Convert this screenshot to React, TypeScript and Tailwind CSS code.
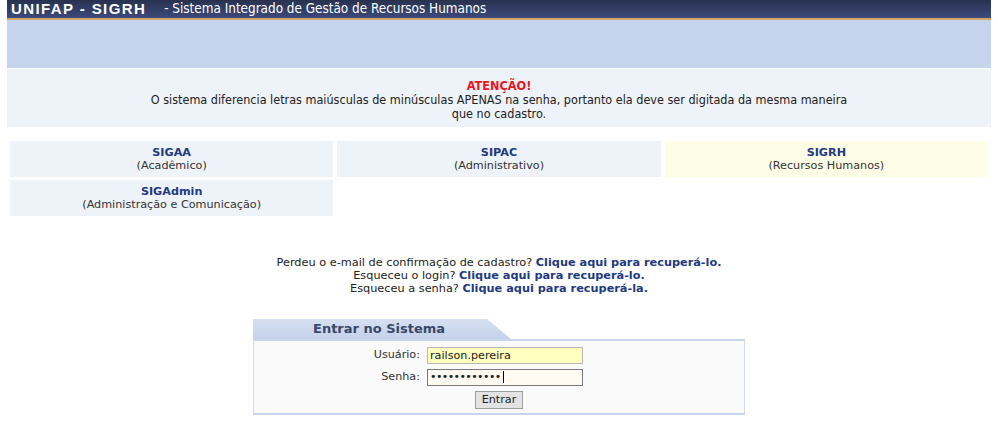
import React from "react";

const verd = "font-['DejaVu_Sans',Verdana,sans-serif]";
const cond = "font-['DejaVu_Sans_Condensed','Liberation_Sans_Narrow',Tahoma,sans-serif]";

function Cell({ title, sub, yellow }: { title: string; sub: string; yellow?: boolean }) {
  return (
    <div
      className={`h-[36px] flex flex-col items-center justify-center text-[11.2px] leading-[13px] ${
        yellow ? "bg-[#fefee6]" : "bg-[#eef2f9]"
      }`}
    >
      <span className="font-bold text-[#223a80]">{title}</span>
      <span className="text-[#333]">{sub}</span>
    </div>
  );
}

export default function App() {
  return (
    <div className={`w-[998px] h-[444px] bg-white overflow-hidden ${verd}`}>
      <div className="ml-[7px] w-[984px]">
        {/* header */}
        <div className="h-[18px] bg-gradient-to-b from-[#28324f] to-[#3c4a7c] flex items-center pl-[4px] text-white">
          <span className="font-['Liberation_Sans',Arial,sans-serif] font-bold text-[15px] tracking-[1.4px] leading-[18px]">
            UNIFAP - SIGRH
          </span>
          <span className={`${cond} text-[13.4px] ml-[18px] leading-[18px]`}>
            - Sistema Integrado de Gestão de Recursos Humanos
          </span>
        </div>
        <div className="h-[2px] bg-[#d5a466]" />
        <div className="h-[48px] bg-[#c5d3ec]" />
        {/* notice */}
        <div className={`mt-[1px] h-[58px] bg-[#eef2f9] flex flex-col items-center pt-[9px] text-[12.5px] leading-[14px] ${cond}`}>
          <span className="font-bold text-[#e8171d] text-[12.6px] leading-[15px]">ATENÇÃO!</span>
          <span className="text-[#222] text-center">
            O sistema diferencia letras maiúsculas de minúsculas APENAS na senha, portanto ela deve ser digitada da mesma maneira
            <br />
            que no cadastro.
          </span>
        </div>
        {/* systems */}
        <div className="mt-[14px] px-[3px] grid grid-cols-3 gap-x-[4px] gap-y-[3px]">
          <Cell title="SIGAA" sub="(Acadêmico)" />
          <Cell title="SIPAC" sub="(Administrativo)" />
          <Cell title="SIGRH" sub="(Recursos Humanos)" yellow />
          <Cell title="SIGAdmin" sub="(Administração e Comunicação)" />
        </div>
        {/* links */}
        <div className="mt-[40px] flex flex-col items-center text-[11.3px] leading-[13px] text-[#222]">
          <p>
            Perdeu o e-mail de confirmação de cadastro?{" "}
            <a className="font-bold text-[#223a80]">Clique aqui para recuperá-lo.</a>
          </p>
          <p>
            Esqueceu o login? <a className="font-bold text-[#223a80]">Clique aqui para recuperá-lo.</a>
          </p>
          <p>
            Esqueceu a senha? <a className="font-bold text-[#223a80]">Clique aqui para recuperá-la.</a>
          </p>
        </div>
        {/* login box */}
        <div className="mt-[24px] ml-[246px] w-[492px]">
          <div className="relative h-[20px] w-[258px]">
            <svg className="absolute inset-0" width="258" height="20" viewBox="0 0 258 20">
              <defs>
                <linearGradient id="tg" x1="0" y1="0" x2="0" y2="1">
                  <stop offset="0" stopColor="#d6e0f1" />
                  <stop offset="1" stopColor="#c3d1ea" />
                </linearGradient>
              </defs>
              <polygon points="0,0 234,0 258,20 0,20" fill="url(#tg)" />
            </svg>
            <span className="relative block pl-[60px] font-bold text-[13px] leading-[20px] text-[#3a4868]">
              Entrar no Sistema
            </span>
          </div>
          <div className="border-t-[2px] border-b-[2px] border-x border-[#c9d5ea] border-x-[#d4dbe6] bg-[#fafafa] pt-[3px] pb-[2px] text-[11.2px] text-[#333]">
            <div className="flex items-center h-[22px]">
              <span className="w-[166px] text-right">Usuário:</span>
              <input
                readOnly
                value="railson.pereira"
                className={`ml-[7px] w-[156px] h-[17px] bg-[#ffffc0] border border-[#b8b8b8] px-[2px] text-[11.2px] text-[#222] outline-none ${verd}`}
              />
            </div>
            <div className="flex items-center h-[22px]">
              <span className="w-[166px] text-right">Senha:</span>
              <div className="ml-[7px] w-[156px] h-[17px] bg-[#fffaf2] border border-[#7a7a7a] flex items-center px-[2px]">
                <span className="text-[11px] leading-[12px] tracking-[-0.6px] text-[#222]">••••••••••••</span>
                <span className="ml-[2px] w-px h-[12px] bg-black" />
              </div>
            </div>
            <div className="flex justify-center h-[23px] items-center">
              <button className={`w-[48px] h-[18px] bg-[#e3e3e3] border border-[#a0a0a0] text-[11.2px] leading-[14px] text-[#222] ${verd}`}>
                Entrar
              </button>
            </div>
          </div>
        </div>
      </div>
    </div>
  );
}
